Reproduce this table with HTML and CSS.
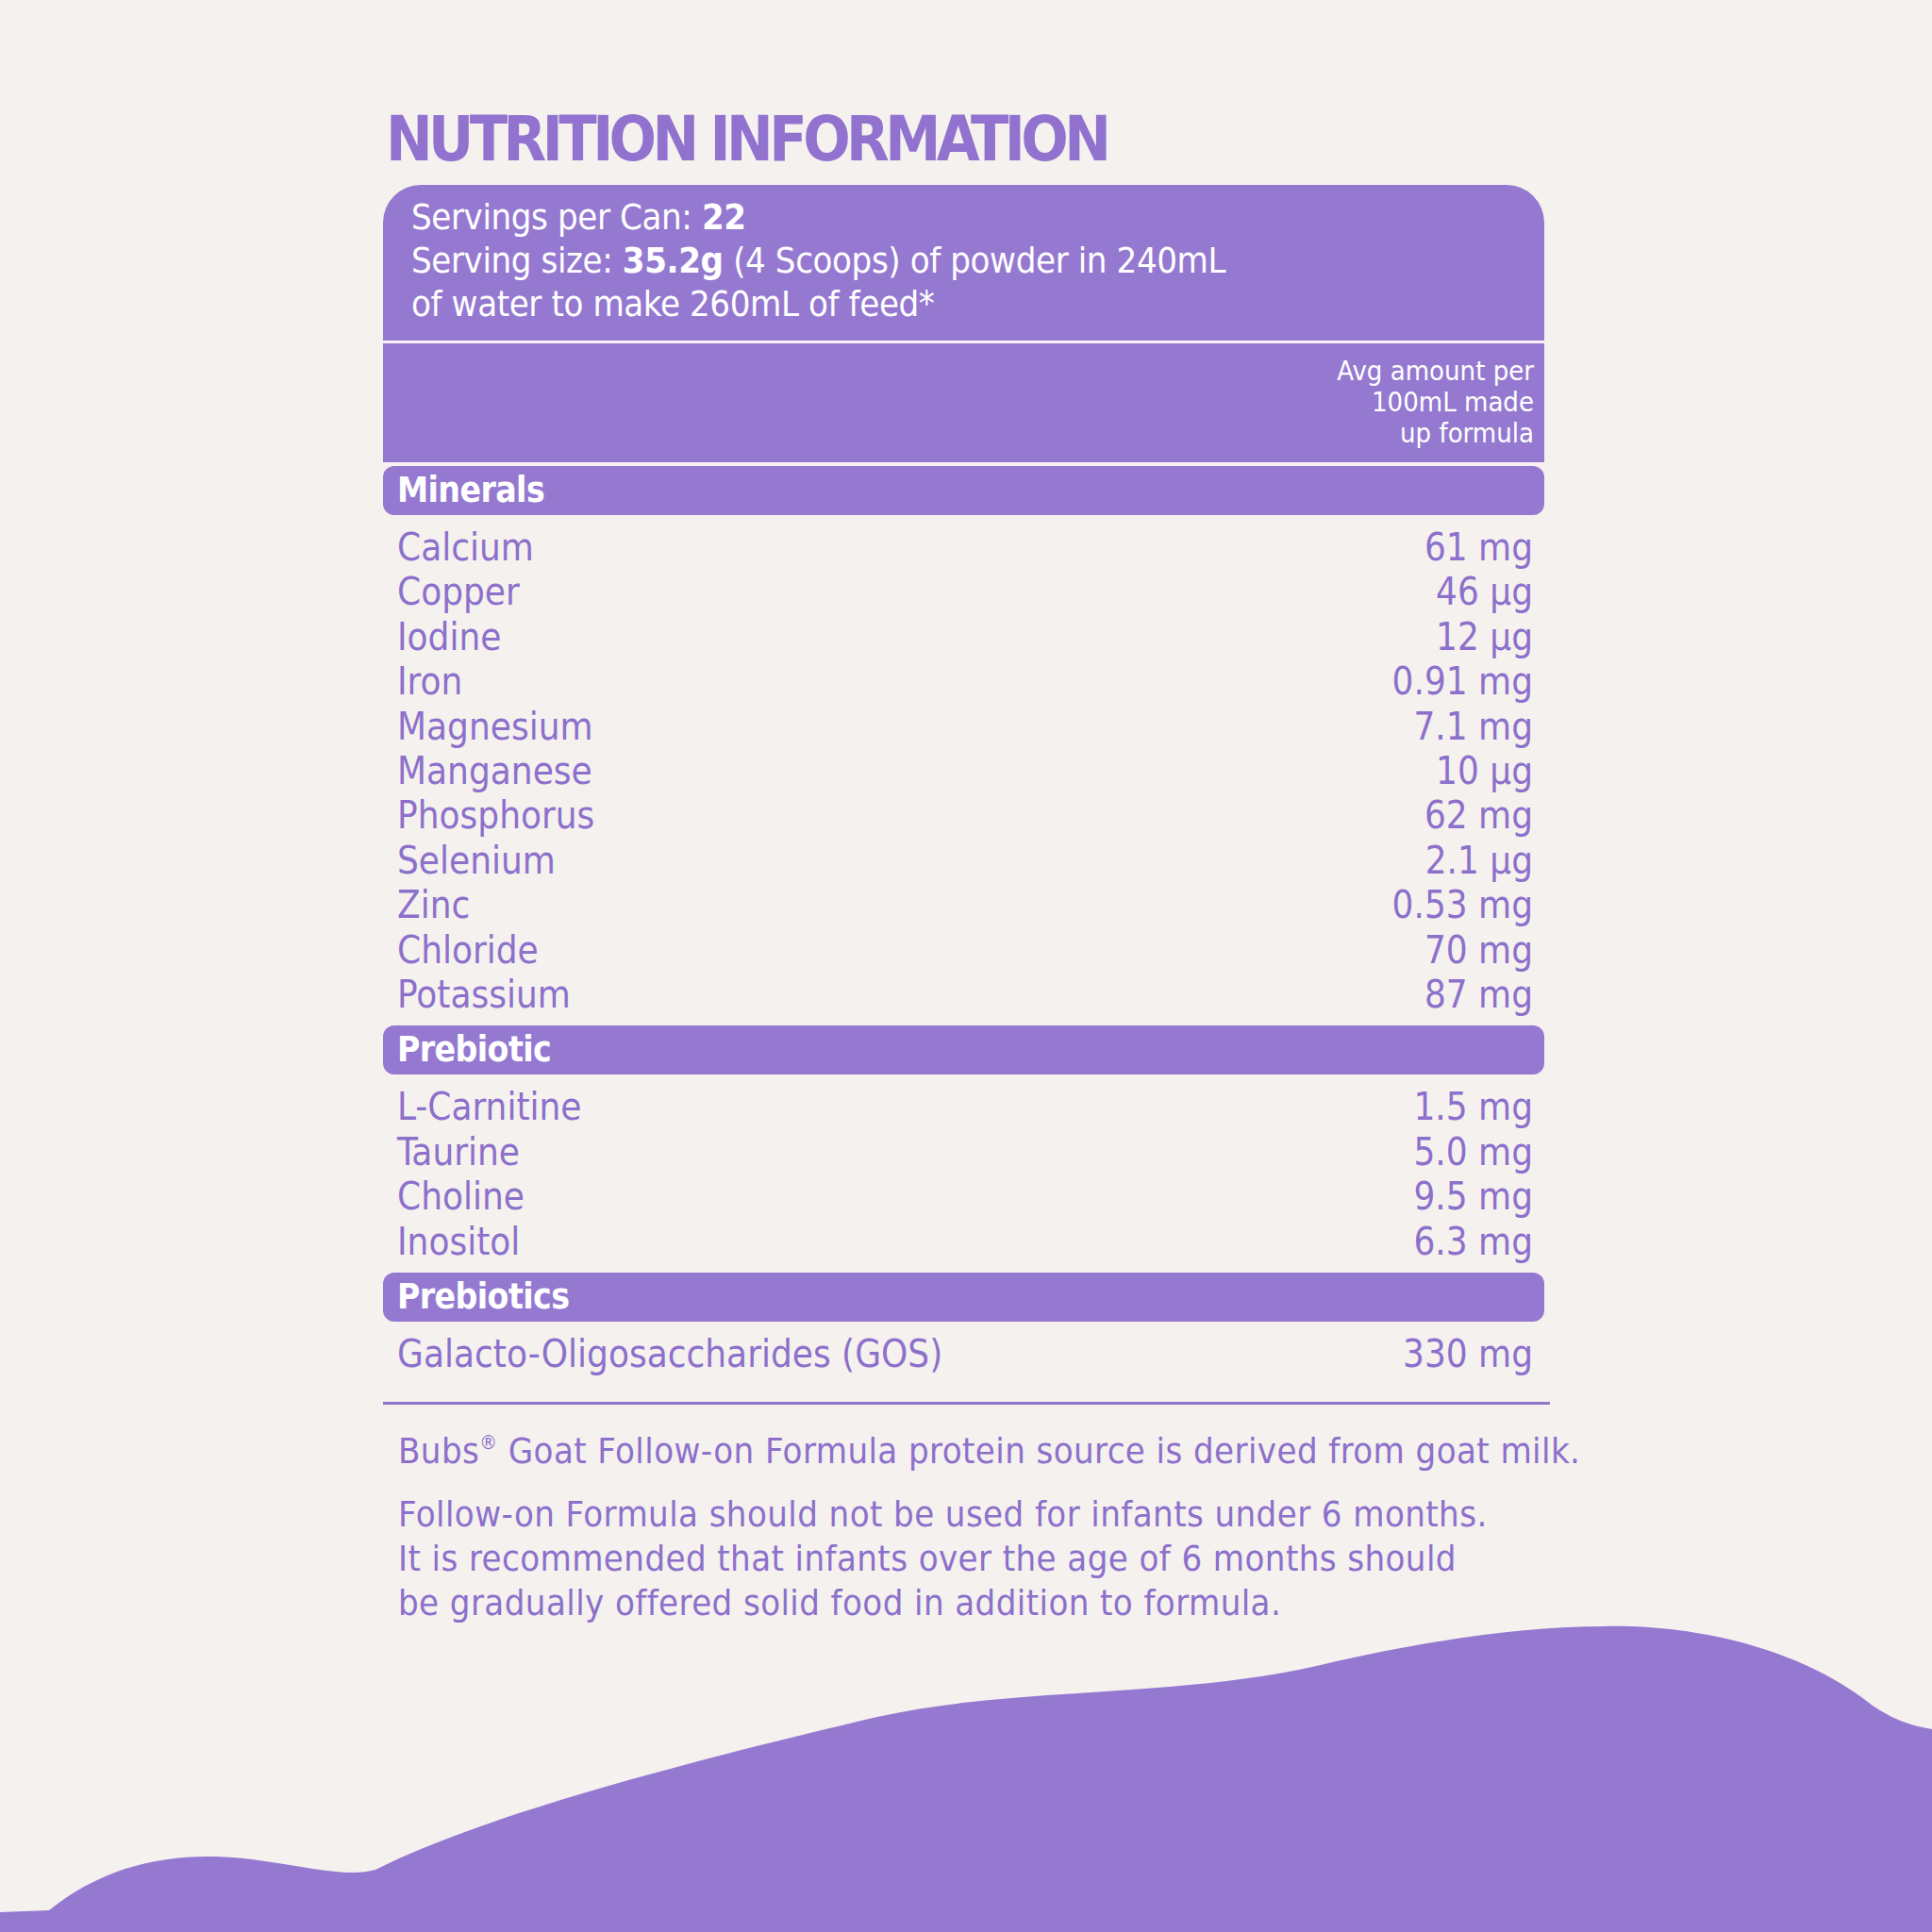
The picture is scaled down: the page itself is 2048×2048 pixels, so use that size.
FILE: index.html
```html
<!DOCTYPE html>
<html lang="en">
<head>
<meta charset="utf-8">
<title>Nutrition Information</title>
<link rel="stylesheet" href="styles.css">
</head>
<body>
<main class="page">
  <h1 class="title">NUTRITION INFORMATION</h1>
  <section class="panel">
    <div class="serving">Servings per Can: <b>22</b><br>Serving size: <b>35.2g</b> (4 Scoops) of powder in 240mL<br>of water to make 260mL of feed*</div>
    <div class="colhead">Avg amount per<br>100mL made<br>up formula</div>

    <div class="group-head">Minerals</div>
    <ul class="rows">
      <li><span>Calcium</span><span>61 mg</span></li>
      <li><span>Copper</span><span>46 µg</span></li>
      <li><span>Iodine</span><span>12 µg</span></li>
      <li><span>Iron</span><span>0.91 mg</span></li>
      <li><span>Magnesium</span><span>7.1 mg</span></li>
      <li><span>Manganese</span><span>10 µg</span></li>
      <li><span>Phosphorus</span><span>62 mg</span></li>
      <li><span>Selenium</span><span>2.1 µg</span></li>
      <li><span>Zinc</span><span>0.53 mg</span></li>
      <li><span>Chloride</span><span>70 mg</span></li>
      <li><span>Potassium</span><span>87 mg</span></li>
    </ul>

    <div class="group-head">Prebiotic</div>
    <ul class="rows">
      <li><span>L-Carnitine</span><span>1.5 mg</span></li>
      <li><span>Taurine</span><span>5.0 mg</span></li>
      <li><span>Choline</span><span>9.5 mg</span></li>
      <li><span>Inositol</span><span>6.3 mg</span></li>
    </ul>

    <div class="group-head">Prebiotics</div>
    <ul class="rows rows-last">
      <li><span>Galacto-Oligosaccharides (GOS)</span><span>330 mg</span></li>
    </ul>
  </section>
  <hr class="rule">
  <p class="note">Bubs<sup>®</sup> Goat Follow-on Formula protein source is derived from goat milk.</p>
  <p class="note">Follow-on Formula should not be used for infants under 6 months.<br>It is recommended that infants over the age of 6 months should<br>be gradually offered solid food in addition to formula.</p>
</main>
<svg class="wave" viewBox="0 0 2048 368" width="2048" height="368" aria-hidden="true">
  <path d="M0 347 L52 345 C120 290 200 280 281 293 C330 300 370 310 398 302 C520 240 760 180 930 140 C1070 108 1250 120 1400 85 C1520 57 1620 44 1700 44 C1780 42 1900 60 1985 128 C2010 145 2030 150 2048 153 L2048 368 L0 368 Z" fill="#9579d1"/>
</svg>
</body>
</html>
```

FILE: styles.css
```css
html, body {
  margin: 0;
  padding: 0;
}

body {
  width: 2048px;
  height: 2048px;
  background: #f5f1ee;
  font-family: "DejaVu Sans", "Liberation Sans", sans-serif;
  font-stretch: condensed;
  color: #8c70cb;
  position: relative;
  overflow: hidden;
}

.page {
  padding: 115px 0 0 406px;
}

.title {
  margin: 0 0 15px 3px;
  font-size: 66px;
  line-height: 66px;
  font-weight: bold;
  color: #9172cf;
  letter-spacing: -4.6px;
  white-space: nowrap;
}

.panel {
  width: 1231px;
}

.serving {
  background: #9579d1;
  color: #fff;
  border-radius: 40px 40px 0 0;
  padding: 11px 20px 16px 30px;
  font-size: 38px;
  line-height: 46px;
  letter-spacing: -0.4px;
  white-space: nowrap;
  border-bottom: 3px solid #faf0f8;
}

.colhead {
  background: #9579d1;
  color: #fff;
  text-align: right;
  padding: 13px 11px 14px 20px;
  font-size: 29px;
  line-height: 33px;
  border-bottom: 3px solid #faf0f8;
}

.group-head {
  margin-top: 1px;
  height: 52px;
  background: #9579d1;
  color: #fff;
  border-radius: 12px;
  padding-left: 15px;
  font-size: 37px;
  line-height: 52px;
  font-weight: bold;
  letter-spacing: -0.6px;
}

.rows {
  list-style: none;
  margin: 0;
  padding: 11px 12px 8px 15px;
}

.rows li {
  display: flex;
  justify-content: space-between;
  font-size: 40px;
  line-height: 47.4px;
  white-space: nowrap;
}

.rows-last {
  padding-bottom: 0;
}

.rule {
  margin: 26px 0 0 0;
  width: 1237px;
  height: 3px;
  border: 0;
  background: #8f74cc;
}

.note {
  margin: 26px 0 0 16px;
  font-size: 38px;
  line-height: 47px;
  letter-spacing: 0.4px;
  white-space: nowrap;
}

.note + .note {
  margin-top: 20px;
}

.note sup {
  font-size: 0.55em;
  line-height: 0;
  vertical-align: 0.7em;
}

.wave {
  position: absolute;
  left: 0;
  top: 1680px;
  display: block;
}
```
